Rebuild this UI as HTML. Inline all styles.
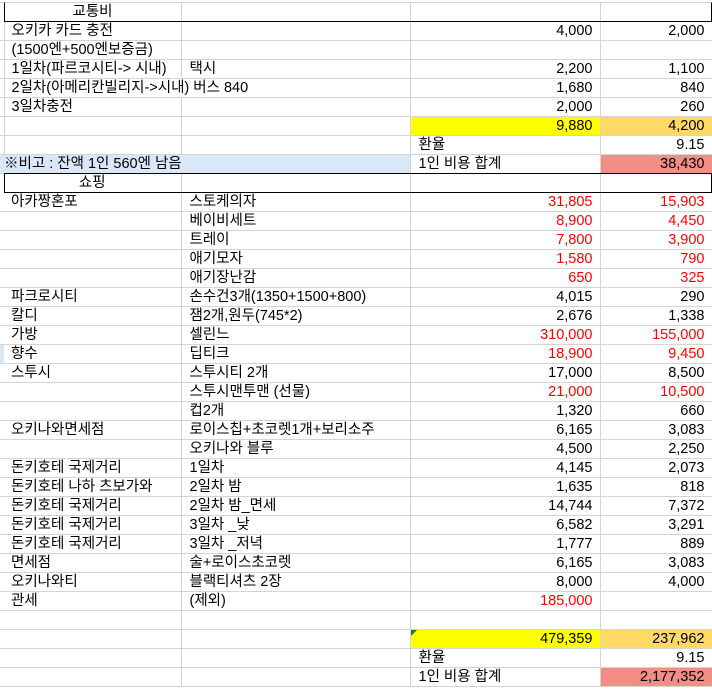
<!DOCTYPE html>
<html><head><meta charset="utf-8"><style>
body{margin:0;background:#fff;width:712px;height:690px;overflow:hidden;position:relative;font-family:"Liberation Sans","Noto Sans CJK KR",sans-serif;font-size:14.5px;color:#000}
table{position:absolute;left:0;top:2px;border-collapse:collapse;table-layout:fixed;width:712px}
td{height:18px;padding:0;border-right:1px solid #d4d4d4;border-bottom:1px solid #d4d4d4;white-space:nowrap;overflow:visible;line-height:18px;vertical-align:middle}
tr:first-child td{border-top:1px solid #d4d4d4}
td.a{padding-left:7px}
td.b{padding-left:8px}
td.n{text-align:right;padding-right:7px}
.r{color:#f00}
.y{background:#ffff00}
.o{background:#ffd966}
.p{background:#f28e85}
.bl{background:#dae7f9}
td.nr{border-right:none}
td.x{border-right:none}
.box{position:absolute;left:4px;width:706px;height:18px;border:1px solid #000;pointer-events:none}
.ov{position:relative}
.ov span{position:absolute;left:7px;top:0;background:#fff;padding-right:2px}
</style></head><body>
<table>
<colgroup><col style="width:4px"><col style="width:177px"><col style="width:229px"><col style="width:190px"><col style="width:112px"></colgroup>
<tr><td style="border-bottom:none"></td><td style="text-align:center">교통비</td><td></td><td></td><td></td></tr>
<tr><td></td><td class="a">오키카 카드 충전</td><td></td><td class="n">4,000</td><td class="n">2,000</td></tr>
<tr><td></td><td class="a">(1500엔+500엔보증금)</td><td></td><td></td><td></td></tr>
<tr><td></td><td class="a">1일차(파르코시티-&gt; 시내)</td><td class="b">택시</td><td class="n">2,200</td><td class="n">1,100</td></tr>
<tr><td></td><td class="nr ov"><span>2일차(아메리칸빌리지-&gt;시내) 버스 840</span></td><td></td><td class="n">1,680</td><td class="n">840</td></tr>
<tr><td></td><td class="a">3일차충전</td><td></td><td class="n">2,000</td><td class="n">260</td></tr>
<tr><td></td><td></td><td></td><td class="n y">9,880</td><td class="n o">4,200</td></tr>
<tr><td></td><td></td><td></td><td class="b">환율</td><td class="n">9.15</td></tr>
<tr><td class="bl nr"></td><td class="bl nr" style="position:relative"><span style="position:absolute;left:0;top:0">※비고 : 잔액 1인 560엔 남음</span></td><td class="bl"></td><td class="b">1인 비용 합계</td><td class="n p">38,430</td></tr>
<tr><td class="x" style="border-bottom:none"></td><td style="text-align:center">쇼핑</td><td></td><td></td><td></td></tr>
<tr><td class="x"></td><td class="a">아카짱혼포</td><td class="b">스토케의자</td><td class="n r">31,805</td><td class="n r">15,903</td></tr>
<tr><td class="x"></td><td></td><td class="b">베이비세트</td><td class="n r">8,900</td><td class="n r">4,450</td></tr>
<tr><td class="x"></td><td></td><td class="b">트레이</td><td class="n r">7,800</td><td class="n r">3,900</td></tr>
<tr><td class="x"></td><td></td><td class="b">애기모자</td><td class="n r">1,580</td><td class="n r">790</td></tr>
<tr><td class="x"></td><td></td><td class="b">애기장난감</td><td class="n r">650</td><td class="n r">325</td></tr>
<tr><td class="x"></td><td class="a">파크로시티</td><td class="b">손수건3개(1350+1500+800)</td><td class="n">4,015</td><td class="n">290</td></tr>
<tr><td class="x"></td><td class="a">칼디</td><td class="b">잼2개,원두(745*2)</td><td class="n">2,676</td><td class="n">1,338</td></tr>
<tr><td class="x"></td><td class="a">가방</td><td class="b">셀린느</td><td class="n r">310,000</td><td class="n r">155,000</td></tr>
<tr><td class="bl x"></td><td class="a">향수</td><td class="b">딥티크</td><td class="n r">18,900</td><td class="n r">9,450</td></tr>
<tr><td class="x"></td><td class="a">스투시</td><td class="b">스투시티 2개</td><td class="n">17,000</td><td class="n">8,500</td></tr>
<tr><td class="x"></td><td></td><td class="b">스투시맨투맨 (선물)</td><td class="n r">21,000</td><td class="n r">10,500</td></tr>
<tr><td class="x"></td><td></td><td class="b">컵2개</td><td class="n">1,320</td><td class="n">660</td></tr>
<tr><td class="x"></td><td class="a">오키나와면세점</td><td class="b">로이스칩+초코렛1개+보리소주</td><td class="n">6,165</td><td class="n">3,083</td></tr>
<tr><td class="x"></td><td></td><td class="b">오키나와 블루</td><td class="n">4,500</td><td class="n">2,250</td></tr>
<tr><td class="x"></td><td class="a">돈키호테 국제거리</td><td class="b">1일차</td><td class="n">4,145</td><td class="n">2,073</td></tr>
<tr><td class="x"></td><td class="a">돈키호테 나하 츠보가와</td><td class="b">2일차 밤</td><td class="n">1,635</td><td class="n">818</td></tr>
<tr><td class="x"></td><td class="a">돈키호테 국제거리</td><td class="b">2일차 밤_면세</td><td class="n">14,744</td><td class="n">7,372</td></tr>
<tr><td class="x"></td><td class="a">돈키호테 국제거리</td><td class="b">3일차 _낮</td><td class="n">6,582</td><td class="n">3,291</td></tr>
<tr><td class="x"></td><td class="a">돈키호테 국제거리</td><td class="b">3일차 _저녁</td><td class="n">1,777</td><td class="n">889</td></tr>
<tr><td class="x"></td><td class="a">면세점</td><td class="b">술+로이스초코렛</td><td class="n">6,165</td><td class="n">3,083</td></tr>
<tr><td class="x"></td><td class="a">오키나와티</td><td class="b">블랙티셔츠 2장</td><td class="n">8,000</td><td class="n">4,000</td></tr>
<tr><td class="x"></td><td class="a">관세</td><td class="b">(제외)</td><td class="n r">185,000</td><td></td></tr>
<tr><td class="x"></td><td></td><td></td><td></td><td></td></tr>
<tr><td class="x"></td><td></td><td></td><td class="n y" style="position:relative"><span style="position:absolute;left:0;top:0;width:0;height:0;border-top:6px solid #1e7b1e;border-right:6px solid transparent"></span>479,359</td><td class="n o">237,962</td></tr>
<tr><td class="x"></td><td></td><td></td><td class="b">환율</td><td class="n">9.15</td></tr>
<tr><td class="x"></td><td></td><td></td><td class="b">1인 비용 합계</td><td class="n p">2,177,352</td></tr>
</table>
<div class="box" style="top:2px;border-top-color:#d4d4d4"></div>
<div class="box" style="top:173px"></div>
</body></html>
